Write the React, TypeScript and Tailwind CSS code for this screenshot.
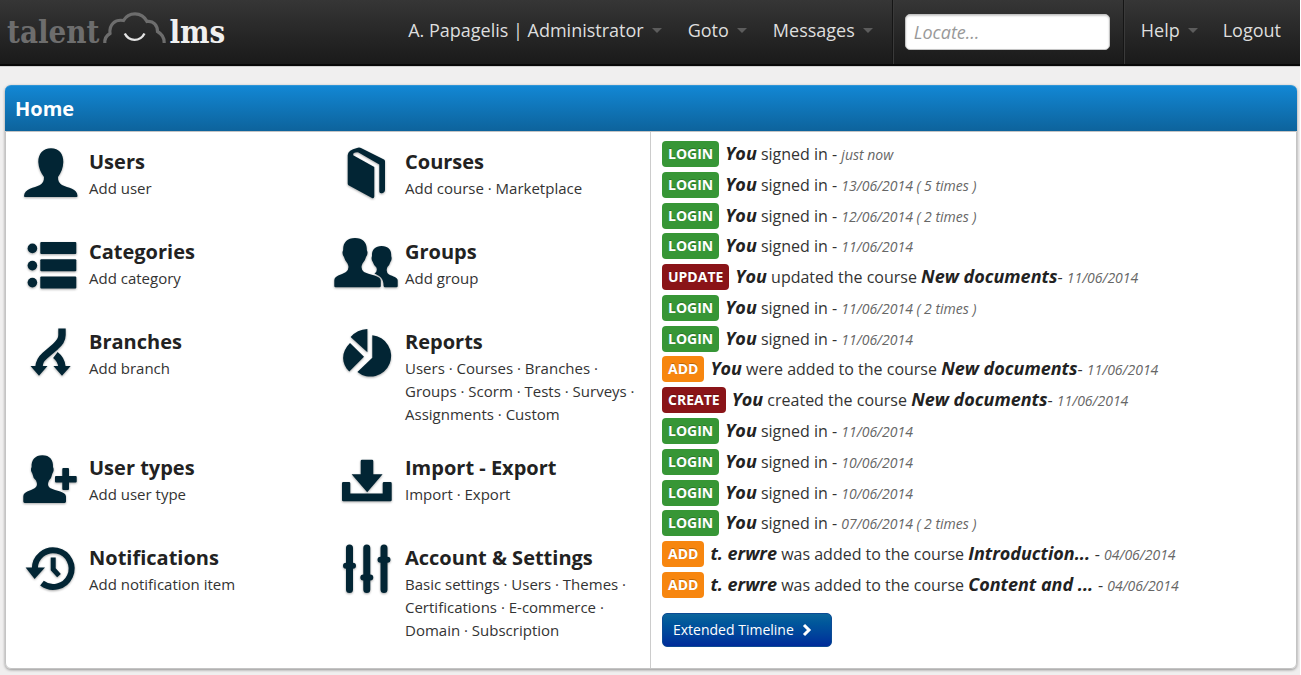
import type { ReactNode } from "react";

const INK = "#022534";

function Icon({ children }: { children: ReactNode }) {
  return (
    <svg
      viewBox="0 0 64 54"
      className="h-[54px] w-16 shrink-0 drop-shadow-[0_1px_1px_rgba(0,0,0,0.35)]"
      fill={INK}
      aria-hidden="true"
    >
      {children}
    </svg>
  );
}

const icons: Record<string, ReactNode> = {
  user: (
    <path d="M33 2.3C41 2.3 45.5 8 45.3 16C45.2 22 43 27 40 31C40 35 41 37 44 39C50 42 59.5 42.5 59.5 50Q59.5 51 58.5 51H7Q6 51 6 50C6.5 42.5 16 42 22 39C25 37 26 35 26 31C23 27 20.5 22 20.3 16C20.3 8 25 2.3 33 2.3Z" />
  ),
  list: (
    <>
      <rect x="22.3" y="6" width="36" height="12" rx="1" />
      <rect x="22.3" y="23.3" width="36" height="12" rx="1" />
      <rect x="22.3" y="40.6" width="36" height="12" rx="1" />
      <circle cx="14.4" cy="12.4" r="4.8" />
      <circle cx="14.4" cy="29.6" r="4.8" />
      <circle cx="14.4" cy="46.6" r="4.8" />
    </>
  ),
  book: (
    <path d="M23 1.9Q25.5 1.2 27.5 2.2L50 13.4Q51 14 51 15.5V43.5Q51 46.6 48 47.2Q45.3 47.6 45.3 45.6V18.5L24.5 6.4Q18.6 6 19.2 9.2L40.3 21V50.5Q40 53 38 52L14.5 39.3Q13.7 38.8 13.7 37.5V9Q14 4 23 1.9Z" />
  ),
  group: (
    <>
      <path d="M21 2C29 2 33.2 7 32.8 14Q34.6 17.5 32 21Q31.5 24 28.5 27.5Q26 33 30 36C36 39 46.8 39.5 46.8 44.5V50Q46.8 51.3 45.5 51.3H1.5Q.3 51.3 .3 50V44.5C.3 39.5 7 39 12 36Q16 33 13.5 27.5Q10.5 24 10 21Q7.4 17.5 9.2 14C8.8 7 13 2 21 2Z" />
      <path d="M47.6 10C54.5 10 57.6 14 57.2 20Q58.4 23 56.4 26Q55.8 28.5 53.4 31Q51.4 36 55 38.4C59 40.4 63.7 41 63.7 44.4V50Q63.7 51.3 62.5 51.3H51Q49.8 51.3 49.6 50C49.6 42 46 40.5 40.5 37.6Q43.8 35.5 42.4 31.5Q39.4 28.5 38.8 26Q36.8 23 38 20C37.6 14 41 10 47.6 10Z" />
    </>
  ),
  branch: (
    <>
      <path
        d="M44 2.4V9C44 14 41.5 16.5 37.5 20.5L27 29.5C22.5 33.5 21.2 36 21 41"
        fill="none"
        stroke={INK}
        strokeWidth="7.4"
      />
      <path d="M37.4 29C42 32.5 43.6 36 44 41" fill="none" stroke={INK} strokeWidth="7.4" />
      <path d="M12.5 40H29.5L21 49.8ZM35.4 40H52.7L44 49.8Z" />
    </>
  ),
  pie: (
    <path d="M38.3 9.3A20.7 20.7 0 1 1 23.4 46L38.3 31.8ZM33.4 2.9V26.2L16.6 11Q23 3.4 33.4 2.9ZM16 17L30 30.7L15.3 45.6C6.5 37 7.4 25.5 16 17Z" />
  ),
  userPlus: (
    <>
      <path d="M24.3 3.2C32 3.2 35.4 8 35 15Q36.6 18 34.4 21.5Q33.6 26 31 28.5Q28.6 33.5 32 36C38 39 48 39.5 48 44.4V49.6Q48 51 46.6 51H6.7Q5.3 51 5.3 49.6V44.4C5.3 39.5 12 39 17 36Q20.4 33.5 18 28.5Q15 26 14.3 21.5Q12 18 13.6 15C13.2 8 17 3.2 24.3 3.2Z" />
      <path d="M45.3 16H50Q51 16 51 17V24H57.7Q58.7 24 58.7 25V29.5Q58.7 30.5 57.7 30.5H51V37Q51 38 50 38H45.3Q44.3 38 44.3 37V30.5H38Q37 30.5 37 29.5V25Q37 24 38 24H44.3V17Q44.3 16 45.3 16Z" />
    </>
  ),
  tray: (
    <>
      <path d="M28 7.7H38Q39.3 7.7 39.3 9V22.3H48.6L33.2 40.2L17.6 22.3H26.7V9Q26.7 7.7 28 7.7Z" />
      <path d="M9.3 30H15Q16.3 30 16.3 31.3V41.6H48.7V31.3Q48.7 30 50 30H56.4Q57.7 30 57.7 31.3V48Q57.7 49.3 56.4 49.3H9.3Q8 49.3 8 48V31.3Q8 30 9.3 30Z" />
    </>
  ),
  history: (
    <>
      <path
        d="M16.8 27A18.4 18.4 0 1 1 24 41.2"
        fill="none"
        stroke={INK}
        strokeWidth="6"
      />
      <path d="M7.6 25.5H27L16.6 37Z" />
      <path d="M35.2 15.4V27.2L41 33.6" fill="none" stroke={INK} strokeWidth="5" />
    </>
  ),
  sliders: (
    <>
      <path
        d="M15.5 6V47.5M32.8 6V47.5M50 6V47.5"
        stroke={INK}
        strokeWidth="7"
        strokeLinecap="round"
      />
      <path
        d="M12 23.7H19M29.3 35.5H36.3M46.5 17.7H53.5"
        stroke={INK}
        strokeWidth="6"
        strokeLinecap="round"
      />
    </>
  ),
};

const modules = [
  { icon: "user", title: "Users", links: ["Add user"] },
  { icon: "book", title: "Courses", links: ["Add course", "Marketplace"] },
  { icon: "list", title: "Categories", links: ["Add category"] },
  { icon: "group", title: "Groups", links: ["Add group"] },
  { icon: "branch", title: "Branches", links: ["Add branch"] },
  {
    icon: "pie",
    title: "Reports",
    links: ["Users", "Courses", "Branches", "Groups", "Scorm", "Tests", "Surveys", "Assignments", "Custom"],
  },
  { icon: "userPlus", title: "User types", links: ["Add user type"] },
  { icon: "tray", title: "Import - Export", links: ["Import", "Export"] },
  { icon: "history", title: "Notifications", links: ["Add notification item"] },
  {
    icon: "sliders",
    title: "Account & Settings",
    links: ["Basic settings", "Users", "Themes", "Certifications", "E-commerce", "Domain", "Subscription"],
  },
];

type Entry = { kind: string; who?: string; text: string; course?: string; when: string };

const timeline: Entry[] = [
  { kind: "LOGIN", text: "signed in ", when: "just now" },
  { kind: "LOGIN", text: "signed in ", when: "13/06/2014 ( 5 times )" },
  { kind: "LOGIN", text: "signed in ", when: "12/06/2014 ( 2 times )" },
  { kind: "LOGIN", text: "signed in ", when: "11/06/2014" },
  { kind: "UPDATE", text: "updated the course ", course: "New documents", when: "11/06/2014" },
  { kind: "LOGIN", text: "signed in ", when: "11/06/2014 ( 2 times )" },
  { kind: "LOGIN", text: "signed in ", when: "11/06/2014" },
  { kind: "ADD", text: "were added to the course ", course: "New documents", when: "11/06/2014" },
  { kind: "CREATE", text: "created the course ", course: "New documents", when: "11/06/2014" },
  { kind: "LOGIN", text: "signed in ", when: "11/06/2014" },
  { kind: "LOGIN", text: "signed in ", when: "10/06/2014" },
  { kind: "LOGIN", text: "signed in ", when: "10/06/2014" },
  { kind: "LOGIN", text: "signed in ", when: "07/06/2014 ( 2 times )" },
  { kind: "ADD", who: "t. erwre", text: "was added to the course ", course: "Introduction... ", when: "04/06/2014" },
  { kind: "ADD", who: "t. erwre", text: "was added to the course ", course: "Content and ... ", when: "04/06/2014" },
];

const badgeColors: Record<string, string> = {
  LOGIN: "bg-[#379636]",
  UPDATE: "bg-[#8a1418]",
  CREATE: "bg-[#8a1418]",
  ADD: "bg-[#f7860f]",
};

function MenuButton({ children }: { children: ReactNode }) {
  return (
    <button type="button" className="flex items-center gap-2 whitespace-nowrap">
      {children}
      <svg viewBox="0 0 10 5" className="h-[5px] w-2.5" fill="#5c5c5c" aria-hidden="true">
        <path d="M0 0H10L5 5Z" />
      </svg>
    </button>
  );
}

function Logo() {
  return (
    <a
      href="#home"
      aria-label="talentlms"
      className="flex items-center font-['DejaVu_Serif_Condensed','DejaVu_Serif',serif] text-[31px] leading-9 font-bold"
    >
      <span className="text-[#6d6d6d]">talent</span>
      <svg
        viewBox="0 0 66 34"
        className="mr-px mb-2 ml-[3px] h-[34px] w-[66px]"
        fill="none"
        strokeWidth="3.2"
        aria-hidden="true"
      >
        <path
          d="M2.8 32C2.6 27.5 4.5 24.5 8 22.5C7 13.5 13 8 21.5 9.5C24 5 28 2.8 33 2.8C38.5 2.8 42.5 5.5 45 10.5C51.5 9.5 55.5 14.5 55.5 20.5C60 23 62.4 27 62.2 32"
          stroke="#6d6d6d"
        />
        <path d="M22.8 22.5C27 31 38 31 42.5 22.5" stroke="#e4e4e4" strokeWidth="2.4" />
      </svg>
      <span className="text-[#f0f0f0]">lms</span>
    </a>
  );
}

export default function App() {
  return (
    <div className="min-h-screen border-r border-white bg-[#f0efef] pb-[7px] font-['Open_Sans',sans-serif] text-[#333333]">
      <header className="flex h-[66px] items-stretch border-b-2 border-[#080808] bg-linear-to-b from-[#363636] to-[#1a1a1a] pl-[7px] text-lg text-[#dedede] shadow-[0_1px_0_#d0d0d0]">
        <div className="flex flex-1 items-center">
          <Logo />
        </div>
        <nav aria-label="Main" className="flex items-center gap-[26px] pr-5 pb-1">
          <MenuButton>A. Papagelis | Administrator</MenuButton>
          <MenuButton>Goto</MenuButton>
          <MenuButton>Messages</MenuButton>
        </nav>
        <form
          role="search"
          className="flex items-center border-x border-[#3a3a3a] pr-[14px] pl-[11px] shadow-[-1px_0_0_#151515,inset_-1px_0_0_#151515]"
        >
          <label htmlFor="locate" className="sr-only">
            Locate
          </label>
          <input
            id="locate"
            type="text"
            placeholder="Locate…"
            className="mb-px h-9 w-[205px] rounded-[5px] border border-[#c4c4c4] bg-white px-2 text-lg leading-8 text-[#333333] shadow-[inset_0_1px_2px_rgba(0,0,0,0.2)] placeholder:text-[#999999] placeholder:italic"
          />
        </form>
        <nav aria-label="Account" className="flex items-center gap-[25px] pr-[19px] pb-1 pl-4">
          <MenuButton>Help</MenuButton>
          <a href="#logout">Logout</a>
        </nav>
      </header>

      <main className="mt-[19px] mr-[3px] ml-[5px] rounded-md shadow-[0_1px_3px_rgba(0,0,0,0.4)]">
        <h1 className="h-[46px] rounded-t-md border-t border-[#2f95d6] bg-linear-to-b from-[#1287d4] to-[#0d639c] px-2.5 text-xl leading-[46px] font-bold text-white">
          Home
        </h1>
        <div className="grid grid-cols-2 rounded-b-md border border-[#c4c4c4] bg-white">
          <div className="grid grid-cols-2 content-start gap-y-[26px] border-r border-[#cccccc] pt-[14px] pb-[26px] pl-3">
            {modules.map((m) => (
              <section key={m.title} className="flex min-h-16 gap-[7px] pr-2">
                <Icon>{icons[m.icon]}</Icon>
                <div className="pt-px">
                  <h2 className="text-xl leading-[30px] font-bold text-[#222222]">{m.title}</h2>
                  <p className="text-[15px] leading-[23px]">
                    {m.links.map((link, i) => (
                      <span key={link}>
                        <a href="#module" className="whitespace-nowrap">
                          {link}
                        </a>
                        {i < m.links.length - 1 && " · "}
                      </span>
                    ))}
                  </p>
                </div>
              </section>
            ))}
          </div>

          <div className="flex flex-col pt-[9px] pb-[21px] pl-[11px]">
            <ul className="flex flex-1 flex-col justify-between">
              {timeline.map((e, i) => (
                <li key={i} className="flex items-center gap-1.5 whitespace-nowrap">
                  <span
                    className={`rounded-sm px-1.5 text-sm leading-[26px] font-bold text-white [text-shadow:0_-1px_0_rgba(0,0,0,0.25)] ${badgeColors[e.kind]}`}
                  >
                    {e.kind}
                  </span>
                  <p className="text-base leading-6">
                    <b className="text-lg leading-6 text-[#222222] italic">{e.who ?? "You"}</b> {e.text}
                    {e.course && <b className="text-lg leading-6 text-[#222222] italic">{e.course}</b>}-{" "}
                    <i className="text-sm leading-6 text-[#666666]">{e.when}</i>
                  </p>
                </li>
              ))}
            </ul>
            <button
              type="button"
              className="mt-[15px] flex h-[34px] w-[170px] items-center gap-2 rounded-[5px] border border-[#0c4b94] bg-linear-to-b from-[#0d659b] to-[#022b9a] px-2.5 text-sm text-white"
            >
              Extended Timeline
              <svg viewBox="0 0 10 14" className="h-3.5 w-2.5" fill="none" stroke="#ffffff" strokeWidth="3" aria-hidden="true">
                <path d="M2 2L7 7L2 12" />
              </svg>
            </button>
          </div>
        </div>
      </main>
    </div>
  );
}
